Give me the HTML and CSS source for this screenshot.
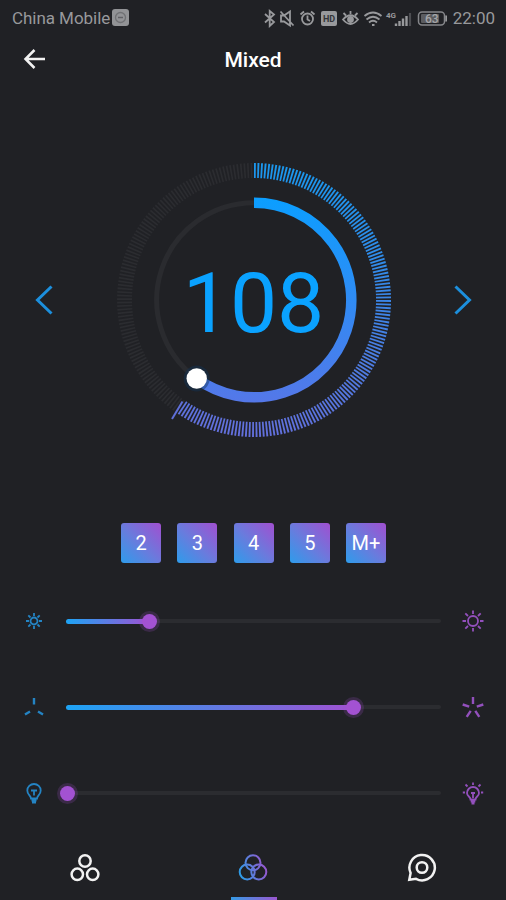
FILE: index.html
```html
<!DOCTYPE html>
<html lang="en">
  <head>
    <meta charset="utf-8">
    <title>Mixed</title>
    <link rel="stylesheet" href="styles.css">
  </head>
  <body>
    <svg class="defs">
      <linearGradient id="arc" gradientUnits="userSpaceOnUse" x1="0" y1="-100" x2="0" y2="105">
        <stop offset="0" stop-color="#0c9eff"/>
        <stop offset="1" stop-color="#5577e8"/>
      </linearGradient>
      <linearGradient id="ticks" gradientUnits="userSpaceOnUse" x1="0" y1="-137" x2="-30" y2="137">
        <stop offset="0" stop-color="#1a97ee"/>
        <stop offset="1" stop-color="#646fdc"/>
      </linearGradient>
      <linearGradient id="tab" gradientUnits="userSpaceOnUse" x1="2" y1="20" x2="28" y2="12">
        <stop offset="0" stop-color="#2e9be6"/>
        <stop offset="1" stop-color="#9a56cf"/>
      </linearGradient>
    </svg>

    <div class="statusbar">
      <span class="carrier">China Mobile</span>
      <svg class="sim" width="17" height="17" viewBox="0 0 17 17">
        <rect width="17" height="17" rx="3" fill="#929396"/>
        <circle cx="8.5" cy="8.5" r="5" fill="none" stroke="#707174" stroke-width="1.3"/>
        <path d="M6 8.500h5" stroke="#606165" stroke-width="1.5"/>
      </svg>
      <svg class="status-icons" width="183" height="20" viewBox="265 7 183 20" fill="none" stroke="#98999c" stroke-width="1.8">
        <path d="M266 13l9 8-4.300 4v-15l4.300 3.500-9 8"/>
        <path d="M282 14.500h3l6-4v14l-6-4h-3zM281.500 10.500l13 14"/>
        <circle cx="308.500" cy="18" r="5.500"/>
        <path d="M308.500 14.500v4l2.500 1.500M301.500 13.500l3.500-3M315.500 13.500l-3.500-3"/>
        <rect x="322" y="10" width="16" height="15" rx="2" fill="#98999c" stroke="none"/>
        <text class="hd" x="324" y="21">HD</text>
        <path d="M344 18.500q7.500-8.500 15 0q-7.500 9-15 0zM344.500 12l2.500 2.500M351.500 10v3M358.500 12l-2.500 2.500"/>
        <circle cx="351.500" cy="18.500" r="2.500" fill="#98999c"/>
        <path d="M365.500 15q8.500-7 17 0M367.500 18.500q6.500-5.500 13 0M370 21.500q4-3.500 8 0M373 24h2.500"/>
        <text class="net" x="387" y="17">4G</text>
        <path d="M397 25v-2.500M400.500 25v-5M404 25v-7.500M407.500 25v-10" stroke-width="2.400"/>
        <path d="M411 25v-13" stroke="#4c4d51" stroke-width="2.200"/>
        <rect x="419.500" y="11" width="26" height="13" rx="3.500" stroke="#85868a" stroke-width="1.500"/>
        <rect x="422" y="13" width="18" height="9" rx="1" fill="#5b5c60" stroke="none"/>
        <path d="M447.200 14.500v6"/>
        <text class="battery" x="426" y="22">63</text>
      </svg>
      <span class="clock">22:00</span>
    </div>

    <div class="header">
      <svg class="back" width="24" height="22" viewBox="0 0 24 22">
        <path d="M11.500 2L2.500 11l9 9M2.500 11H22"/>
      </svg>
      <h1>Mixed</h1>
    </div>

    <div class="dial">
      <svg class="arrow" width="20" height="32" viewBox="0 0 20 32"><path d="M17.500 2.500L3.500 16l14 13.500"/></svg>
      <div class="ring">
        <svg width="300" height="300" viewBox="-150 -150 300 300" fill="none">
          <path d="M-73.350 106.700A129.500 129.500 0 0 1 0 -129.500" pathLength="145.500" stroke="#2b2c30" stroke-width="15" stroke-dasharray=".75 .75"/>
          <path d="M-57.500 78.500A97.300 97.300 0 0 1 0 -97.300" stroke="#2a2b2f" stroke-width="5"/>
          <path d="M0 -129.500A129.500 129.500 0 1 1 -73.350 106.700" pathLength="214.500" stroke="url(#ticks)" stroke-width="15" stroke-dasharray=".8 .7"/>
          <path d="M-71.500 101.500L-82 119" stroke="#5f6fd8" stroke-width="2"/>
          <path d="M0 -97.300A97.300 97.300 0 1 1 -57.500 78.500" stroke="url(#arc)" stroke-width="10.500"/>
          <circle cx="-57.300" cy="78.500" r="13" fill="#123456" fill-opacity=".45"/>
          <circle cx="-57.300" cy="78.500" r="10.200" fill="#fff"/>
        </svg>
        <span class="value">108</span>
      </div>
      <svg class="arrow" width="20" height="32" viewBox="0 0 20 32"><path d="M2.500 2.500l14 13.500-14 13.500"/></svg>
    </div>

    <div class="presets">
      <div class="preset">2</div>
      <div class="preset">3</div>
      <div class="preset">4</div>
      <div class="preset">5</div>
      <div class="preset">M+</div>
    </div>

    <div class="sliders">
      <div class="slider">
        <svg class="icon low" width="24" height="24" viewBox="-12 -12 24 24">
          <circle r="3.500"/>
          <path d="M0-5v-3M0 5v3M-5 0h-3M5 0h3M-3.500-3.500l-2.200-2.200M3.500-3.500l2.200-2.200M-3.500 3.500l-2.200 2.200M3.500 3.500l2.200 2.200"/>
        </svg>
        <div class="track"><div class="fill" style="width: 84px"></div></div>
        <svg class="icon high" width="24" height="24" viewBox="-12 -12 24 24">
          <circle r="5"/>
          <path d="M0-7v-3.500M0 7v3.500M-7 0h-3.500M7 0h3.500M-5-5l-2.700-2.700M5-5l2.700-2.700M-5 5l-2.700 2.700M5 5l2.700 2.700"/>
        </svg>
      </div>
      <div class="slider">
        <svg class="icon low rays" width="24" height="24" viewBox="-12 -12 24 24">
          <path d="M0-2.500v-6.500M-4 4.500l-5 3M4 4.500l5 3"/>
        </svg>
        <div class="track"><div class="fill" style="width: 288px"></div></div>
        <svg class="icon high rays" width="24" height="24" viewBox="-12 -12 24 24">
          <path d="M0-3v-7M-3.800-.3l-6.500-2.200M3.800-.3l6.500-2.200M-2.300 3.800l-4 6M2.300 3.800l4 6"/>
        </svg>
      </div>
      <div class="slider">
        <svg class="icon low" width="24" height="24" viewBox="-12 -12 24 24">
          <path d="M-3 5.500c0-3-3.700-3.500-3.700-8a6.700 6.500 0 0 1 13.400 0c0 4.500-3.700 5-3.700 8zM-3-2.500h6M0-2.500v5M-2.500 7.500h5M-2 9.500h4"/>
        </svg>
        <div class="track"><div class="fill" style="width: 2px"></div></div>
        <svg class="icon high" width="24" height="24" viewBox="-12 -12 24 24">
          <path d="M-2.500 6.500c0-3-3.500-3-3.500-6.500a6 6 0 0 1 12 0c0 3.500-3.500 3.500-3.500 6.500zM-2 0h4M0 0v5M-2.300 8.500h4.600M-1.500 10.500h3M0-8v-2.500M-8-.5h-2.200M8-.5h2.200M-5.500-6.500l-2-2M5.500-6.500l2-2"/>
        </svg>
      </div>
    </div>

    <div class="tabs">
      <div class="tab">
        <svg width="30" height="30" viewBox="0 0 30 30">
          <circle cx="15" cy="8" r="5.700"/>
          <circle cx="7.300" cy="21.300" r="5.700"/>
          <circle cx="22.700" cy="21.300" r="5.700"/>
        </svg>
      </div>
      <div class="tab active">
        <svg width="30" height="30" viewBox="0 0 30 30">
          <circle cx="15" cy="9.800" r="7.500"/>
          <circle cx="9.200" cy="19" r="7.500"/>
          <circle cx="20.800" cy="19" r="7.500"/>
        </svg>
      </div>
      <div class="tab">
        <svg width="30" height="30" viewBox="0 0 30 30">
          <path d="M3.600 20A12.700 12.700 0 1 1 9 25.800L2.300 26.700Z"/>
          <circle cx="15" cy="14.500" r="5.300"/>
        </svg>
      </div>
    </div>
  </body>
</html>
```

FILE: styles.css
```css
body{
  margin: 0;
  width: 506px;
  height: 900px;
  overflow: hidden;
  display: flex;
  flex-direction: column;
  background: #202125;
  color: #fff;
  font-family: Roboto, "Liberation Sans", sans-serif;
}
.defs{
  position: absolute;
  width: 0;
  height: 0;
}
.statusbar{
  display: flex;
  align-items: center;
  box-sizing: border-box;
  height: 35px;
  padding: 0 11px 0 12px;
  color: #98999c;
  font-size: 17px;
}
.carrier{
  letter-spacing: -0.05px;
}
.sim{
  margin-left: 2px;
}
.status-icons{
  margin-left: auto;
  margin-right: 6px;
}
.status-icons text{
  stroke: none;
  fill: #98999c;
  font-weight: 700;
}
.status-icons .hd{
  font-size: 9px;
  fill: #333438;
}
.status-icons .net{
  font-size: 8px;
}
.status-icons .battery{
  font-size: 12px;
  font-weight: 500;
  fill: #a5a6a9;
}
.header{
  display: grid;
  grid-template-columns: 60px 1fr 60px;
  align-items: center;
  height: 49px;
}
.header h1{
  margin: 0;
  text-align: center;
  font-size: 21px;
  font-weight: 500;
}
.back{
  margin-left: 23px;
  margin-bottom: 2px;
  fill: none;
  stroke: #f2f2f2;
  stroke-width: 2.5;
}
.dial{
  display: flex;
  align-items: center;
  justify-content: space-between;
  height: 300px;
  margin-top: 66px;
  padding: 0 33px 0 34px;
}
.arrow{
  fill: none;
  stroke: #1c8fdd;
  stroke-width: 3;
}
.ring{
  display: grid;
  place-items: center;
}
.ring > *{
  grid-area: 1 / 1;
}
.value{
  color: #0aa2ff;
  font-size: 84px;
  line-height: 1;
  padding-top: 8px;
}
.presets{
  display: flex;
  justify-content: center;
  gap: 16.25px;
  margin-top: 72.5px;
  padding-left: 1px;
}
.preset{
  width: 40px;
  height: 40px;
  border-radius: 3px;
  line-height: 40px;
  text-align: center;
  font-size: 20px;
  background: linear-gradient(45deg, #2e9ceb, #6a7bdd 48%, #a14fd0);
}
.sliders{
  margin-top: 15.5px;
}
.slider{
  display: flex;
  align-items: center;
  height: 86px;
  padding: 0 21px 0 22px;
}
.icon{
  fill: none;
  stroke-width: 1.8;
}
.rays{
  stroke-width: 2.4;
}
.low{
  stroke: #2484c4;
}
.high{
  stroke: #9350bd;
}
.track{
  flex: 1;
  height: 4px;
  margin: 0 20px;
  border-radius: 2px;
  background: #2b2c30;
}
.fill{
  position: relative;
  height: 5px;
  border-radius: 3px;
  background: linear-gradient(90deg, #1da4f5, #a052d2);
}
.fill::after{
  content: "";
  position: absolute;
  right: -7px;
  top: -5px;
  width: 15px;
  height: 15px;
  border-radius: 50%;
  background: #a352d2;
  box-shadow: 0 0 0 3px rgba(163, 82, 210, 0.2);
}
.tabs{
  display: grid;
  grid-template-columns: repeat(3, 1fr);
  flex: 1;
}
.tab{
  position: relative;
  display: flex;
  align-items: center;
  justify-content: center;
  padding-left: 1px;
}
.tab svg{
  fill: none;
  stroke: #f2f2f2;
  stroke-width: 2.5;
}
.tab.active svg{
  stroke: url(#tab);
  stroke-width: 2;
}
.tab.active::after{
  content: "";
  position: absolute;
  left: 62px;
  bottom: 0;
  width: 46px;
  height: 3px;
  background: linear-gradient(90deg, #359be6, #9a56cf);
}
```
